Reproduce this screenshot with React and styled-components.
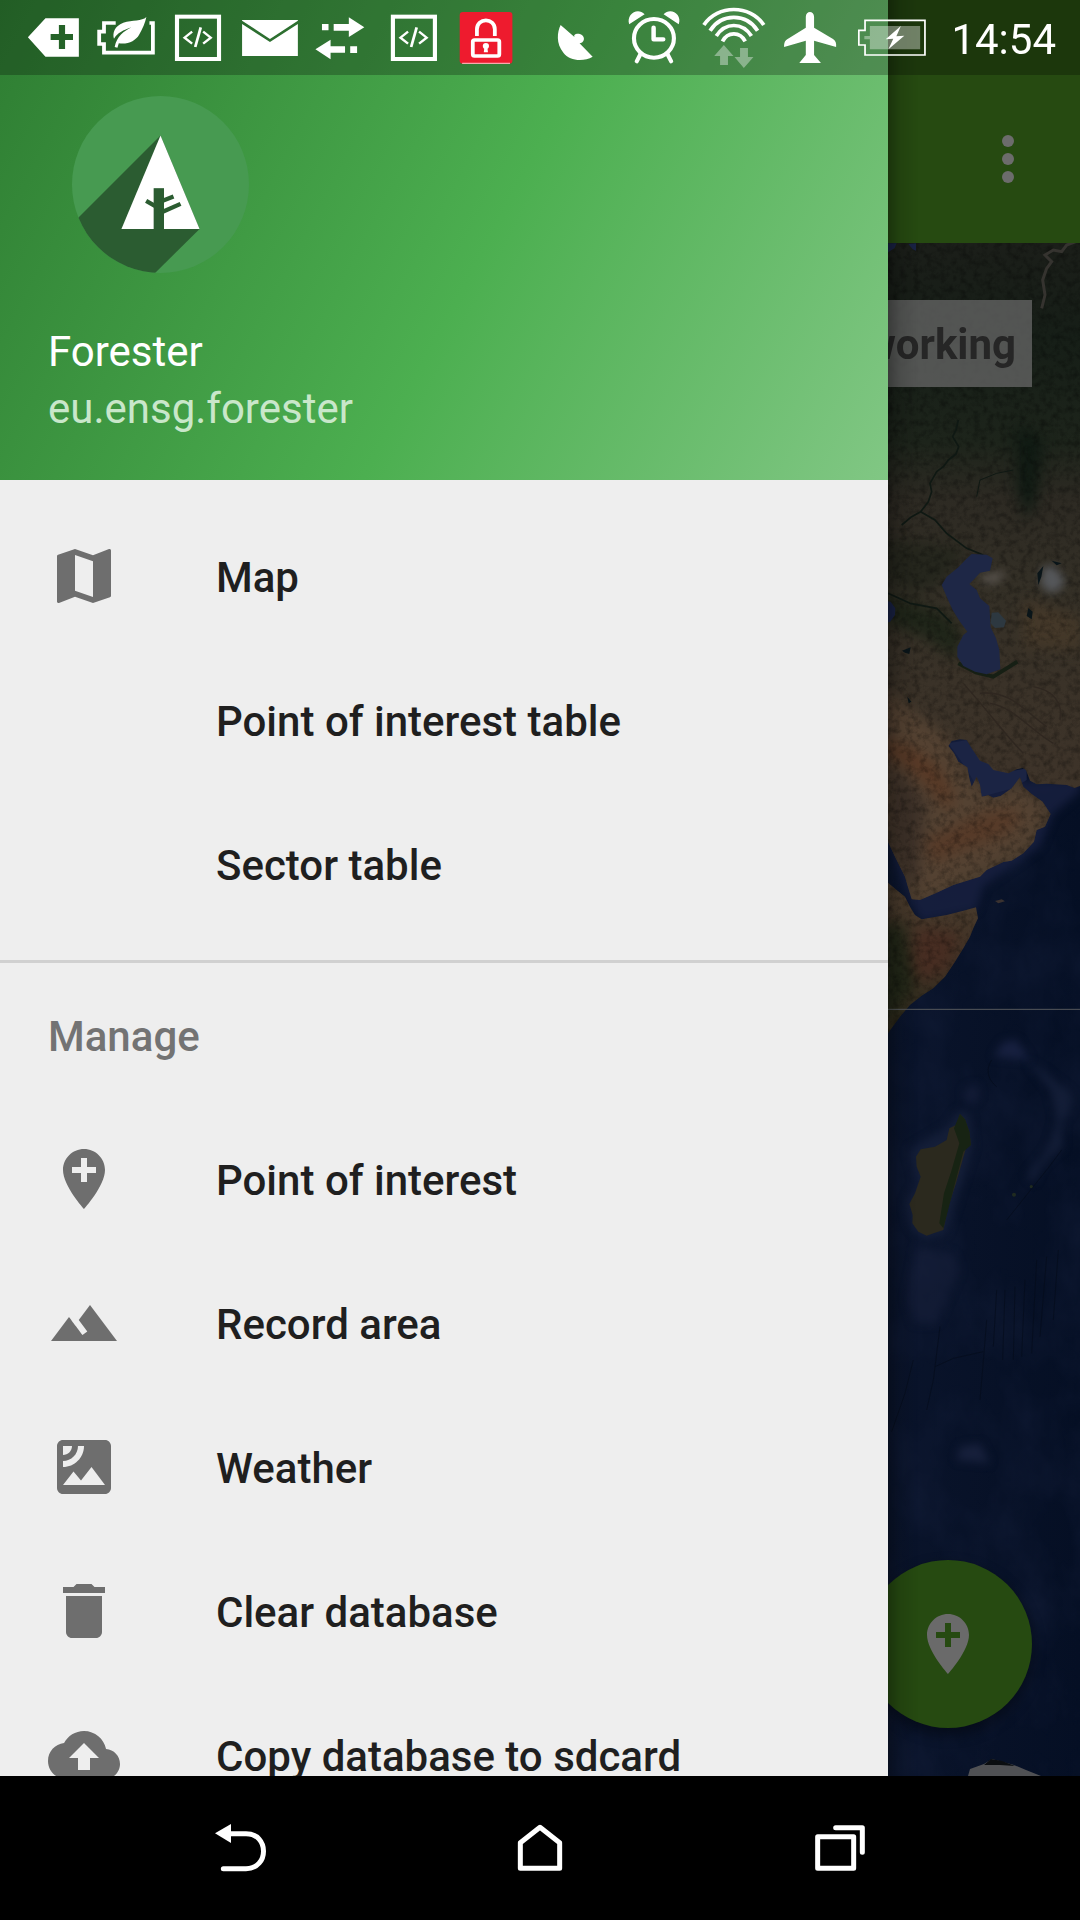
import React from "react";
import styled, { createGlobalStyle } from "styled-components";

const GlobalStyle = createGlobalStyle`
  *, *::before, *::after { box-sizing: border-box; }
  body { margin: 0; background: #000; font-family: Roboto, "Noto Sans", sans-serif; }
  button { font: inherit; border: 0; padding: 0; background: none; color: inherit; cursor: pointer; }
  svg { display: block; }
`;

const Device = styled.div`
  display: flex;
  flex-direction: column;
  height: 100vh;
  overflow: hidden;
`;

const Screen = styled.div`
  position: relative;
  flex: 1;
  min-height: 0;
  display: flex;
  flex-direction: column;
  overflow: hidden;
`;

/* ---------- status bar ---------- */

const StatusBar = styled.header`
  position: absolute;
  inset: 0 0 auto 0;
  z-index: 3;
  height: 75px;
  padding: 0 24px 0 18px;
  display: flex;
  align-items: center;
  background: rgba(0, 0, 0, 0.25);
  color: #fff;
`;

const IconGroup = styled.div`
  display: flex;
  margin-left: ${(p) => (p.$end ? "auto" : "0")};
`;

const StatusIcon = styled.svg`
  width: ${(p) => p.$width}px;
  height: 75px;
`;

const Clock = styled.time`
  margin-left: 24px;
  padding-top: 4px;
  font-size: 42px;
  line-height: 48px;
`;

/* ---------- page under the drawer ---------- */

const Toolbar = styled.div`
  display: flex;
  flex: none;
  align-items: center;
  justify-content: flex-end;
  height: 243px;
  padding: 75px 36px 0;
  background: #264a11;
  color: #6c6c6c;
`;

const IconButton = styled.button`
  display: grid;
  place-items: center;
  width: 72px;
  height: 72px;
`;

const MapArea = styled.main`
  position: relative;
  flex: 1;
  min-height: 0;
`;

const MapDrawing = styled.svg`
  width: 100%;
  height: 100%;
`;

const MapLabel = styled.div`
  position: absolute;
  top: 57px;
  right: 48px;
  padding: 20px 16px 18px;
  background: rgba(102, 102, 102, 0.76);
  color: #262626;
  font-size: 42px;
  font-weight: 700;
  line-height: 49px;
`;

const Fab = styled.button`
  position: absolute;
  right: 48px;
  bottom: 48px;
  display: grid;
  place-items: center;
  width: 168px;
  height: 168px;
  border-radius: 50%;
  background: #264a11;
  color: #6a6a6a;
  box-shadow: 0 6px 14px rgba(0, 0, 0, 0.4);
`;

/* ---------- drawer ---------- */

const Drawer = styled.aside`
  position: absolute;
  inset: 0 192px 0 0;
  z-index: 2;
  overflow: hidden;
  background: #eee;
`;

const DrawerShadow = styled.div`
  position: absolute;
  inset: 0 0 0 auto;
  z-index: 1;
  width: 192px;
  background: linear-gradient(to right, rgba(0, 0, 0, 0.3), rgba(0, 0, 0, 0.1) 12px, transparent 30px);
  pointer-events: none;
`;

const DrawerHeader = styled.div`
  display: flex;
  flex-direction: column;
  height: 480px;
  padding: 96px 48px 0;
  background: linear-gradient(118deg, #2e7d32, #4caf50 54%, #81c784);
  font-size: 42px;
  line-height: 57px;
`;

const Avatar = styled.svg`
  flex: none;
  width: 177px;
  height: 177px;
  margin: 0 0 50px 24px;
`;

const AppName = styled.div`
  color: #fff;
`;

const PackageName = styled.div`
  color: #c9e7ca;
`;

const Menu = styled.nav`
  padding-top: 24px;
  font-size: 42px;
  font-weight: 500;
  line-height: 49px;
`;

const MenuList = styled.ul`
  list-style: none;
  margin: 0;
  padding: 0;
`;

const Divider = styled.hr`
  height: 3px;
  margin: 24px 0 0;
  border: 0;
  background: #d0d0d0;
`;

const SectionTitle = styled.h2`
  display: flex;
  align-items: center;
  height: 144px;
  margin: 0;
  padding: 2px 48px 0;
  color: #737373;
  font-size: 42px;
  font-weight: 500;
`;

const MenuButton = styled.button`
  display: grid;
  grid-template-columns: 72px 1fr;
  column-gap: 96px;
  align-items: center;
  width: 100%;
  height: 144px;
  padding: 0 48px;
  color: #1f1f1f;
  text-align: left;
`;

const MenuLabel = styled.span`
  grid-column: 2;
  padding-top: 2px;
`;

const MenuIcon = styled.svg`
  width: 72px;
  height: 72px;
  fill: #6e6e6e;
`;

/* ---------- navigation bar ---------- */

const NavBar = styled.footer`
  display: flex;
  flex: none;
  height: 144px;
  padding: 0 90px;
  background: #000;
`;

const NavButton = styled.button`
  flex: 1;
  display: grid;
  place-items: center;
`;

const NavIcon = styled.svg`
  width: 100px;
  height: 100px;
  fill: none;
  stroke: #fff;
  stroke-width: 15;
  stroke-linecap: round;
  stroke-linejoin: round;
`;

const paths = {
  map: "M20.5 3l-.16.03L15 5.1 9 3 3.36 4.9c-.21.07-.36.25-.36.48V20.5c0 .28.22.5.5.5l.16-.03L9 18.9l6 2.1 5.64-1.9c.21-.07.36-.25.36-.48V3.5c0-.28-.22-.5-.5-.5zM15 19l-6-2.11V5l6 2.11V19z",
  pin: "M12 2C8.14 2 5 5.14 5 9c0 5.25 7 13 7 13s7-7.75 7-13c0-3.86-3.14-7-7-7zm4 8h-3v3h-2v-3H8V8h3V5h2v3h3v2z",
  landscape: "M14 6l-3.75 5 2.85 3.8-1.6 1.2C9.81 13.75 7 10 7 10l-6 8h22L14 6z",
  satellite:
    "M19 3H5c-1.1 0-2 .9-2 2v14c0 1.1.9 2 2 2h14c1.1 0 2-.9 2-2V5c0-1.1-.9-2-2-2zM5 4.99h3C8 6.65 6.66 8 5 8V4.99zM5 12v-2c2.76 0 5-2.25 5-5.01h2C12 8.86 8.87 12 5 12zm0 6l3.5-4.5 2.5 3.01L14.5 12l4.5 6H5z",
  trash: "M6 19c0 1.1.9 2 2 2h8c1.1 0 2-.9 2-2V7H6v12zM19 4h-3.5l-1-1h-5l-1 1H5v2h14V4z",
  upload:
    "M19.35 10.04C18.67 6.59 15.64 4 12 4 9.11 4 6.6 5.64 5.35 8.04 2.34 8.36 0 10.91 0 14c0 3.31 2.69 6 6 6h13c2.76 0 5-2.24 5-5 0-2.64-2.05-4.78-4.65-4.96zM14 13v4h-4v-4H7l5-5 5 5h-3z",
};

const mainItems = [
  { label: "Map", icon: "map" },
  { label: "Point of interest table" },
  { label: "Sector table" },
];

const manageItems = [
  { label: "Point of interest", icon: "pin" },
  { label: "Record area", icon: "landscape" },
  { label: "Weather", icon: "satellite" },
  { label: "Clear database", icon: "trash" },
  { label: "Copy database to sdcard", icon: "upload" },
];

const CodeIcon = () => (
  <g fill="none" stroke="#fff">
    <rect x="514" y="50" width="122" height="127" strokeWidth="12" />
    <path d="M558 95L536 113L558 131M590 95L612 113L590 131" strokeWidth="7" />
    <path d="M583 82L567 141" strokeWidth="8" />
  </g>
);

const notifications = [
  <path fillRule="evenodd" d="M81 112L132 55H229V170H132ZM171 75V102H147V120H171V147H189V120H212V102H189V75Z" />,
  <g>
    <path fill="none" stroke="#fff" strokeWidth="11" d="M336 69H302V95H288V132H302V158H444V69H434" />
    <path d="M425 51C412 64 385 60 358 68C332 78 326 100 331 116C340 100 358 90 382 82C360 93 339 110 333 141L341 143L345 130C372 134 394 122 404 104C414 87 422 68 425 51Z" />
  </g>,
  <CodeIcon />,
  <path d="M703 60H865V62L784 117L703 62ZM703 72L784 126L865 72V168H703Z" />,
  <path d="M935 72H954V91H935ZM969 72H1013V52L1058 82L1013 111V92H969ZM1017 139H1037V159H1017ZM1002 139H960V119L916 148L960 178V158H1002Z" />,
  <g transform="translate(627 0)">
    <CodeIcon />
  </g>,
  <g>
    <rect x="1335" y="36" width="153" height="155" rx="9" fill="#ee1b2e" />
    <path d="M1342 190H1481" stroke="#f9a9ae" strokeWidth="4" />
    <path d="M1385 108V88C1385 52 1437 52 1437 88V108" fill="none" stroke="#fff" strokeWidth="11" />
    <rect x="1373" y="120" width="77" height="48" rx="5" fill="none" stroke="#fff" strokeWidth="11" />
    <circle cx="1411" cy="138" r="9" />
    <path d="M1407 138H1415L1417 157H1405Z" />
  </g>,
];

const systemIcons = [
  <path d="M57 75L98 112C92 103 104 99 113 102C127 106 129 124 116 129L112 130L150 170C125 185 83 184 65 158C43 130 47 96 57 75Z" />,
  <g>
    <circle cx="328" cy="115" r="58" fill="none" stroke="#fff" strokeWidth="12" />
    <path d="M327 83V118H355" fill="none" stroke="#fff" strokeWidth="13" strokeLinecap="round" strokeLinejoin="round" />
    <path d="M256 73C247 42 281 21 301 43ZM400 73C411 42 375 21 356 43Z" />
    <path d="M289 162L278 184M367 162L378 184" stroke="#fff" strokeWidth="12" strokeLinecap="round" />
  </g>,
  <g>
    <g fill="none" stroke="#fff" strokeWidth="11">
      <path d="M473 75C513 13 607 13 647 75" />
      <path d="M491 92C524 39 596 39 629 92" />
      <path d="M509 108C535 66 585 66 611 108" />
      <path d="M527 124C542 94 578 94 593 124" />
    </g>
    <path fill="#8ab38d" d="M531 135L559 168H543V195H520V168H503ZM578 144H601V171H617L589 204L562 171H578Z" />
  </g>,
  <path d="M769 50C769 31 793 31 793 50V83L848 117C856 123 858 130 857 141L793 122V165L813 189H750L769 165V122L706 141C706 130 707 124 715 118L769 83Z" />,
  <g>
    <path d="M941 61H1115V165H941V135H923V91H941Z" fill="none" stroke="#fff" strokeWidth="5" />
    <path d="M955 78H1101V148H955V118H939V108H955Z" fill="#fff" opacity=".37" />
    <path d="M1045 78L1001 118L1023 116L1009 148L1055 107L1032 109Z" />
  </g>,
];

function StatusIcons({ icons, cell, origin }) {
  return icons.map((icon, i) => (
    <StatusIcon
      key={i}
      $width={cell}
      viewBox={`${(origin + cell * i) * 2.904} 0 ${cell * 2.904} 225`}
      preserveAspectRatio="none"
      fill="#fff"
      aria-hidden="true"
    >
      {icon}
    </StatusIcon>
  ));
}

function SatelliteMap() {
  return (
    <MapDrawing viewBox="0 243 1080 1533" preserveAspectRatio="xMaxYMin slice" aria-hidden="true">
      <defs>
        <linearGradient id="land" gradientUnits="userSpaceOnUse" x1="0" y1="-891" x2="0" y2="1500">
          <stop offset="0" stopColor="#1b1e19" />
          <stop offset=".12" stopColor="#161e17" />
          <stop offset=".25" stopColor="#1d241b" />
          <stop offset=".32" stopColor="#2d2a23" />
          <stop offset=".42" stopColor="#332f26" />
          <stop offset=".55" stopColor="#3a3228" />
          <stop offset=".66" stopColor="#3d3329" />
          <stop offset=".8" stopColor="#4b3d2e" />
          <stop offset=".9" stopColor="#3f3125" />
          <stop offset="1" stopColor="#2c2a1b" />
        </linearGradient>
        <linearGradient id="sea" gradientUnits="userSpaceOnUse" x1="888" y1="0" x2="1080" y2="0">
          <stop offset="0" stopColor="#0a142b" />
          <stop offset="1" stopColor="#050f24" />
        </linearGradient>
        <filter id="soft" x="-50%" y="-50%" width="200%" height="200%" colorInterpolationFilters="sRGB">
          <feGaussianBlur stdDeviation="20" />
        </filter>
        <filter id="edge" x="-20%" y="-20%" width="140%" height="140%" colorInterpolationFilters="sRGB">
          <feGaussianBlur stdDeviation="12" />
        </filter>
        <filter id="grain" x="0" y="0" width="100%" height="100%" colorInterpolationFilters="sRGB">
          <feTurbulence type="fractalNoise" baseFrequency=".05" numOctaves="5" seed="8" />
          <feColorMatrix values="0 0 0 0 0  0 0 0 0 0  0 0 0 0 0  2 0 0 0 -.85" />
        </filter>
        <filter id="swell" x="0" y="0" width="100%" height="100%" colorInterpolationFilters="sRGB">
          <feTurbulence type="fractalNoise" baseFrequency=".02 .014" numOctaves="5" seed="3" />
          <feColorMatrix values="0 0 0 0 .09  0 0 0 0 .13  0 0 0 0 .24  1.6 0 0 0 -.6" />
        </filter>
        <path
          id="asia"
          d="M0-900H620V742L600 738L584 744L560 735L500 731L470 733L450 722L438 690L428 684L410 688L385 700L340 690L325 672L300 662L275 625L260 600L240 598L215 603L205 618L222 640L235 665L262 682L268 715L275 740L290 710L300 735L305 770L325 766L340 773L362 768L395 745L420 712L430 740L455 762L488 785L512 822L495 860L470 870L462 905L430 940L395 962L370 966L320 990L300 1010L220 1035L170 1058L120 1080L95 1078L85 1045L75 1010L45 950L24 905L0 880Z"
        />
        <path
          id="africa"
          d="M0 1020L24 1028L50 1050L75 1070L90 1100L105 1125L125 1138L160 1132L200 1125L250 1112L288 1102L294 1135L280 1165L270 1190L250 1225L225 1265L195 1310L160 1345L125 1367L90 1395L60 1430L24 1480L0 1500Z"
        />
        <clipPath id="landClip">
          <use href="#asia" />
          <use href="#africa" />
        </clipPath>
      </defs>

      <rect y="243" width="1080" height="1533" fill="url(#sea)" />
      <rect x="880" y="243" width="200" height="1533" filter="url(#swell)" opacity=".5" />

      <g transform="translate(880 540) scale(.33333)">
        <g fill="#17203f" filter="url(#edge)">
          <path d="M0 850L90 1090L125 1145L290 1110L310 1040L480 920L520 820L600 755V720H430L300 580L190 600V850Z" opacity=".85" />
          <path d="M340 1550L370 1505L410 1500L450 1560Z" />
        </g>
        <path d="M205 610L260 600L300 660L385 695L440 685L440 720L400 745L305 770L262 690Z" fill="#1b2444" />
        <g fill="url(#land)">
          <use href="#asia" />
          <use href="#africa" />
        </g>
        <g clipPath="url(#landClip)">
          <g filter="url(#soft)">
            <path d="M0 440L90 510L200 590L270 720L330 780L430 740L500 820L440 920L300 990L120 1080L0 860Z" fill="#544232" />
            <path d="M0 600C100 600 220 690 220 800C200 840 140 690 0 640Z" fill="#573825" />
            <path d="M130 900C200 880 330 780 420 820C420 900 270 910 160 970Z" fill="#563a28" />
            <path d="M30 660L140 780L110 1060L60 1000L20 880Z" fill="#3d3128" />
            <path d="M110 1160L240 1180L200 1290L80 1340Z" fill="#472d22" />
            <path d="M0 1150L70 1150L110 1330L60 1400L0 1450Z" fill="#222718" />
            <path d="M0 160L110 190L200 220L250 290L230 360L130 290L0 240Z" fill="#1f2519" />
            <path d="M60 0L260 20L200 120L120 160L0 120V0Z" fill="#25261d" />
            <path d="M430 180L600 230V330L430 320Z" fill="#443829" />
            <path d="M410-350L490-300L470-120L440-60L410-150Z" fill="#101a13" />
          </g>
          <rect y="-900" width="620" height="2400" filter="url(#grain)" opacity=".35" />
          <g fill="none" stroke="#0f1813" strokeWidth="5" strokeLinejoin="round">
            <path d="M235-360L228-330L218-310L236-280L228-258L205-240L190-220L170-205L150-170L155-145L145-115L122-85L95-70L65-45M122-85L165-60L200-20L260 25L310 45" />
            <path d="M290-130L300-180L350-200L400-210" strokeWidth="3" />
            <path d="M24 160L90 190L170 205L215 250" />
            <path d="M235 370L290 398L340 410L380 385L412 365" stroke="#161f14" strokeWidth="12" />
            <path d="M300 460C390 450 430 510 500 560M330 490C400 500 450 570 520 610M250 430C330 520 380 590 430 640M460 440C520 450 550 490 540 540" stroke="#2f2720" strokeWidth="4" />
          </g>
          <path
            d="M485-695L495-735L488-780L500-815L515-835L495-855L520-870L545-865L560-885L600-900"
            fill="none"
            stroke="#35332f"
            strokeWidth="9"
          />
          <g filter="url(#edge)">
            <path d="M485 85L520 75L555 120L540 150L510 160L482 135Z" fill="#55575a" />
            <path d="M300 105L370 92L378 105L340 135L305 125Z" fill="#55504a" />
          </g>
          <path d="M490 78L472 100L475 135L484 110ZM515 62L545 70L530 76Z M445 204L458 215L455 238L440 228Z M66 332L92 322L88 342L75 338Z M82 470L94 485L86 490Z" fill="#0a1519" />
        </g>
        <path
          d="M275 42L320 44L338 55L330 92L300 98L285 115L268 132L290 150L300 175L328 198L332 262L348 295L358 330L361 388L320 403L285 395L250 378L232 350L232 320L250 285L262 275L240 245L218 210L200 170L185 135L200 110L235 82L258 58Z"
          fill="#1e2746"
        />
        <path d="M335 218L355 217L378 242L372 262L345 264L332 250Z" fill="#2d3840" />
        <path d="M0 180L32 185L46 205L45 225L30 246L0 250ZM0-890L50-890L44-876L20-860L0-858ZM85-888L108-890L108-868L98-872Z" fill="#192244" />
        <path d="M345 1083L365 1078L375 1084L355 1090Z" fill="#3a3230" />
        <path d="M0 1408H600" stroke="#56585c" strokeWidth="3" />
      </g>

      <g transform="translate(880 1060) scale(.33333)">
        <g filter="url(#edge)" fill="#17203b">
          <path d="M440 0L500 40L575 100L572 150L545 190L550 260L490 310L460 370L440 345L500 270L530 180L510 90Z" opacity=".8" />
          <path d="M85 270L200 200L235 150L270 160L280 260L200 520L130 540L90 500L75 430L110 370Z" opacity=".8" />
          <path d="M110 560L220 580L240 630L170 790L100 790L80 720Z" opacity=".6" />
          <path d="M240 1160L300 1150L330 1210L230 1200Z" />
          <path d="M250 90L290 70L300 110L260 140Z" opacity=".7" />
        </g>
        <path
          d="M240 162L255 178L268 215L273 255L258 265L245 310L228 370L205 440L190 510L165 518L140 527L115 515L97 490L98 465L88 432L105 400L122 350L110 320L108 290L122 268L165 260L200 240L208 205L228 195Z"
          fill="#2b291e"
        />
        <path d="M240 162L255 178L268 215L273 255L250 275L225 370L190 505L178 490L192 400L215 330L238 250L222 205Z" fill="#172313" />
        <circle cx="402" cy="404" r="6" fill="#202b20" />
        <circle cx="454" cy="380" r="5" fill="#202b20" />
        <g fill="none" stroke="#050b1a" strokeWidth="3" opacity=".6">
          <path d="M545 270L500 330L420 430L380 480M335 0C315 30 325 60 350 80M100 900L75 1000L35 1115M180 800L160 960L140 1050M320 780L312 880L300 1020M165 920L220 895L310 875M350 690L340 860M375 690L368 900M405 680L400 900M435 660L425 890M470 600L455 880M500 590L480 830M535 570L520 780" />
        </g>
      </g>

      <path
        d="M968 1776L970 1769L984 1764L992 1759L1014 1765L1026 1770L1041 1776Z"
        fill="#505154"
      />
      <path d="M984 1765L991 1759L1002 1761L1015 1766L1000 1765Z" fill="#0a0d10" />
    </MapDrawing>
  );
}

function MenuItems({ items }) {
  return (
    <MenuList>
      {items.map(({ label, icon }) => (
        <li key={label}>
          <MenuButton type="button">
            {icon && (
              <MenuIcon viewBox="0 0 24 24" aria-hidden="true">
                <path d={paths[icon]} />
              </MenuIcon>
            )}
            <MenuLabel>{label}</MenuLabel>
          </MenuButton>
        </li>
      ))}
    </MenuList>
  );
}

export default function App() {
  return (
    <Device>
      <GlobalStyle />
      <Screen>
        <StatusBar>
          <IconGroup>
            <StatusIcons icons={notifications} cell={72} origin={18} />
          </IconGroup>
          <IconGroup $end>
            <StatusIcons icons={systemIcons} cell={78} origin={-4} />
          </IconGroup>
          <Clock>14:54</Clock>
        </StatusBar>

        <Toolbar>
          <IconButton type="button" aria-label="More options">
            <svg width="72" height="72" viewBox="0 0 24 24" fill="currentColor">
              <circle cx="12" cy="6" r="2" />
              <circle cx="12" cy="12" r="2" />
              <circle cx="12" cy="18" r="2" />
            </svg>
          </IconButton>
        </Toolbar>

        <MapArea>
          <SatelliteMap />
          <MapLabel>working</MapLabel>
          <Fab type="button" aria-label="Add point of interest">
            <svg width="72" height="72" viewBox="0 0 24 24" fill="currentColor">
              <path d={paths.pin} />
            </svg>
          </Fab>
        </MapArea>

        <DrawerShadow />
        <Drawer>
          <DrawerHeader>
            <Avatar viewBox="216 48 530 530" aria-hidden="true">
              <defs>
                <clipPath id="disc">
                  <circle cx="481" cy="313" r="265" />
                </clipPath>
              </defs>
              <g clipPath="url(#disc)">
                <rect x="216" y="48" width="530" height="530" fill="#479a51" />
                <path d="M481 166L150 497V660H382L598 446Z" fill="#2b5c31" />
              </g>
              <path d="M481 166L598 446H364Z" fill="#fff" />
              <g stroke="#2b5c31" fill="none">
                <path d="M476 324V448" strokeWidth="31" />
                <path d="M476 384L438 362M476 366L520 349M476 400L541 371" strokeWidth="13" />
              </g>
            </Avatar>
            <AppName>Forester</AppName>
            <PackageName>eu.ensg.forester</PackageName>
          </DrawerHeader>
          <Menu aria-label="Main">
            <MenuItems items={mainItems} />
            <Divider />
            <SectionTitle>Manage</SectionTitle>
            <MenuItems items={manageItems} />
          </Menu>
        </Drawer>
      </Screen>

      <NavBar>
        <NavButton type="button" aria-label="Back">
          <NavIcon viewBox="-30 -6 300 300">
            <path d="M85 101H138C208 101 208 206 138 206H70" />
            <path d="M45 100L93 72V129Z" fill="#fff" stroke="none" />
          </NavIcon>
        </NavButton>
        <NavButton type="button" aria-label="Home">
          <NavIcon viewBox="870 -6 300 300">
            <path d="M961 205V128L1020 82L1079 128V205Z" />
          </NavIcon>
        </NavButton>
        <NavButton type="button" aria-label="Recent apps">
          <NavIcon viewBox="0 -6 300 300">
            <path d="M83 110H191V205H83ZM137 83H217V157" />
          </NavIcon>
        </NavButton>
      </NavBar>
    </Device>
  );
}
